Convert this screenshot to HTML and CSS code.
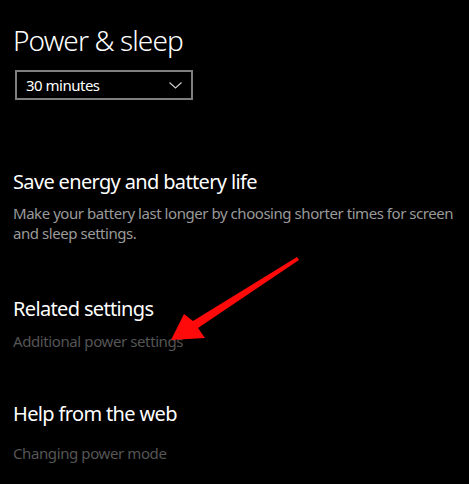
FILE: index.html
```html
<!DOCTYPE html>
<html>
<head>
<meta charset="utf-8">
<link rel="stylesheet" href="styles.css">
</head>
<body>
<main class="page">
  <h1 class="title">Power &amp; sleep</h1>
  <div class="select">
    <span class="select-text">30 minutes</span>
    <svg class="chevron" width="13" height="7" viewBox="0 0 13 7"><path d="M0.5 0.5 L6.5 6 L12.5 0.5" fill="none" stroke="#cfcfcf" stroke-width="1.1"/></svg>
  </div>

  <h2 class="heading save">Save energy and battery life</h2>
  <p class="desc">Make your battery last longer by choosing shorter times for screen and sleep settings.</p>

  <h2 class="heading related">Related settings</h2>
  <a class="link link-related">Additional power settings</a>

  <h2 class="heading help">Help from the web</h2>
  <a class="link link-help">Changing power mode</a>

  <svg class="arrow" width="469" height="484" viewBox="0 0 469 484">
    <polygon points="297,257 299,260 198,328 205,338 171,340 184,314 193,321" fill="#ff0a0a"/>
  </svg>
</main>
</body>
</html>
```

FILE: styles.css
```css
html, body {
  margin: 0;
  padding: 0;
  background: #000;
}
.page {
  position: relative;
  width: 469px;
  height: 484px;
  overflow: hidden;
  padding-left: 13px;
  box-sizing: border-box;
  display: flex;
  flex-direction: column;
  align-items: flex-start;
  font-family: "Noto Sans", "Open Sans", sans-serif;
  color: #fff;
}
.title {
  margin: 22px 0 0 0;
  font-size: 28px;
  line-height: 36px;
  font-weight: 300;
  letter-spacing: -0.9px;
}
.select {
  margin: 12px 0 0 2px;
  width: 178px;
  height: 30px;
  box-sizing: border-box;
  border: 2px solid #7f7f7f;
  display: flex;
  align-items: center;
  justify-content: space-between;
  padding: 0 9px 0 9px;
}
.select-text {
  font-size: 15px;
  line-height: 20px;
  color: #fff;
  letter-spacing: -0.5px;
}
.chevron {
  display: block;
  margin-top: 1px;
}
.heading {
  margin: 0;
  font-size: 20px;
  line-height: 28px;
  font-weight: 400;
  letter-spacing: -0.65px;
}
.save { margin-top: 68px; }
.desc {
  margin: 7px 0 0 0;
  font-size: 15px;
  line-height: 20px;
  color: #9a9a9a;
  width: 450px;
  letter-spacing: -0.45px;
}
.related { margin-top: 52px; }
.link {
  font-size: 15px;
  line-height: 20px;
  color: #555;
  letter-spacing: -0.4px;
}
.link-related { margin-top: 8px; }
.help { margin-top: 49px; }
.link-help { margin-top: 15px; }
.arrow {
  position: absolute;
  left: 0;
  top: 0;
  pointer-events: none;
}
```
